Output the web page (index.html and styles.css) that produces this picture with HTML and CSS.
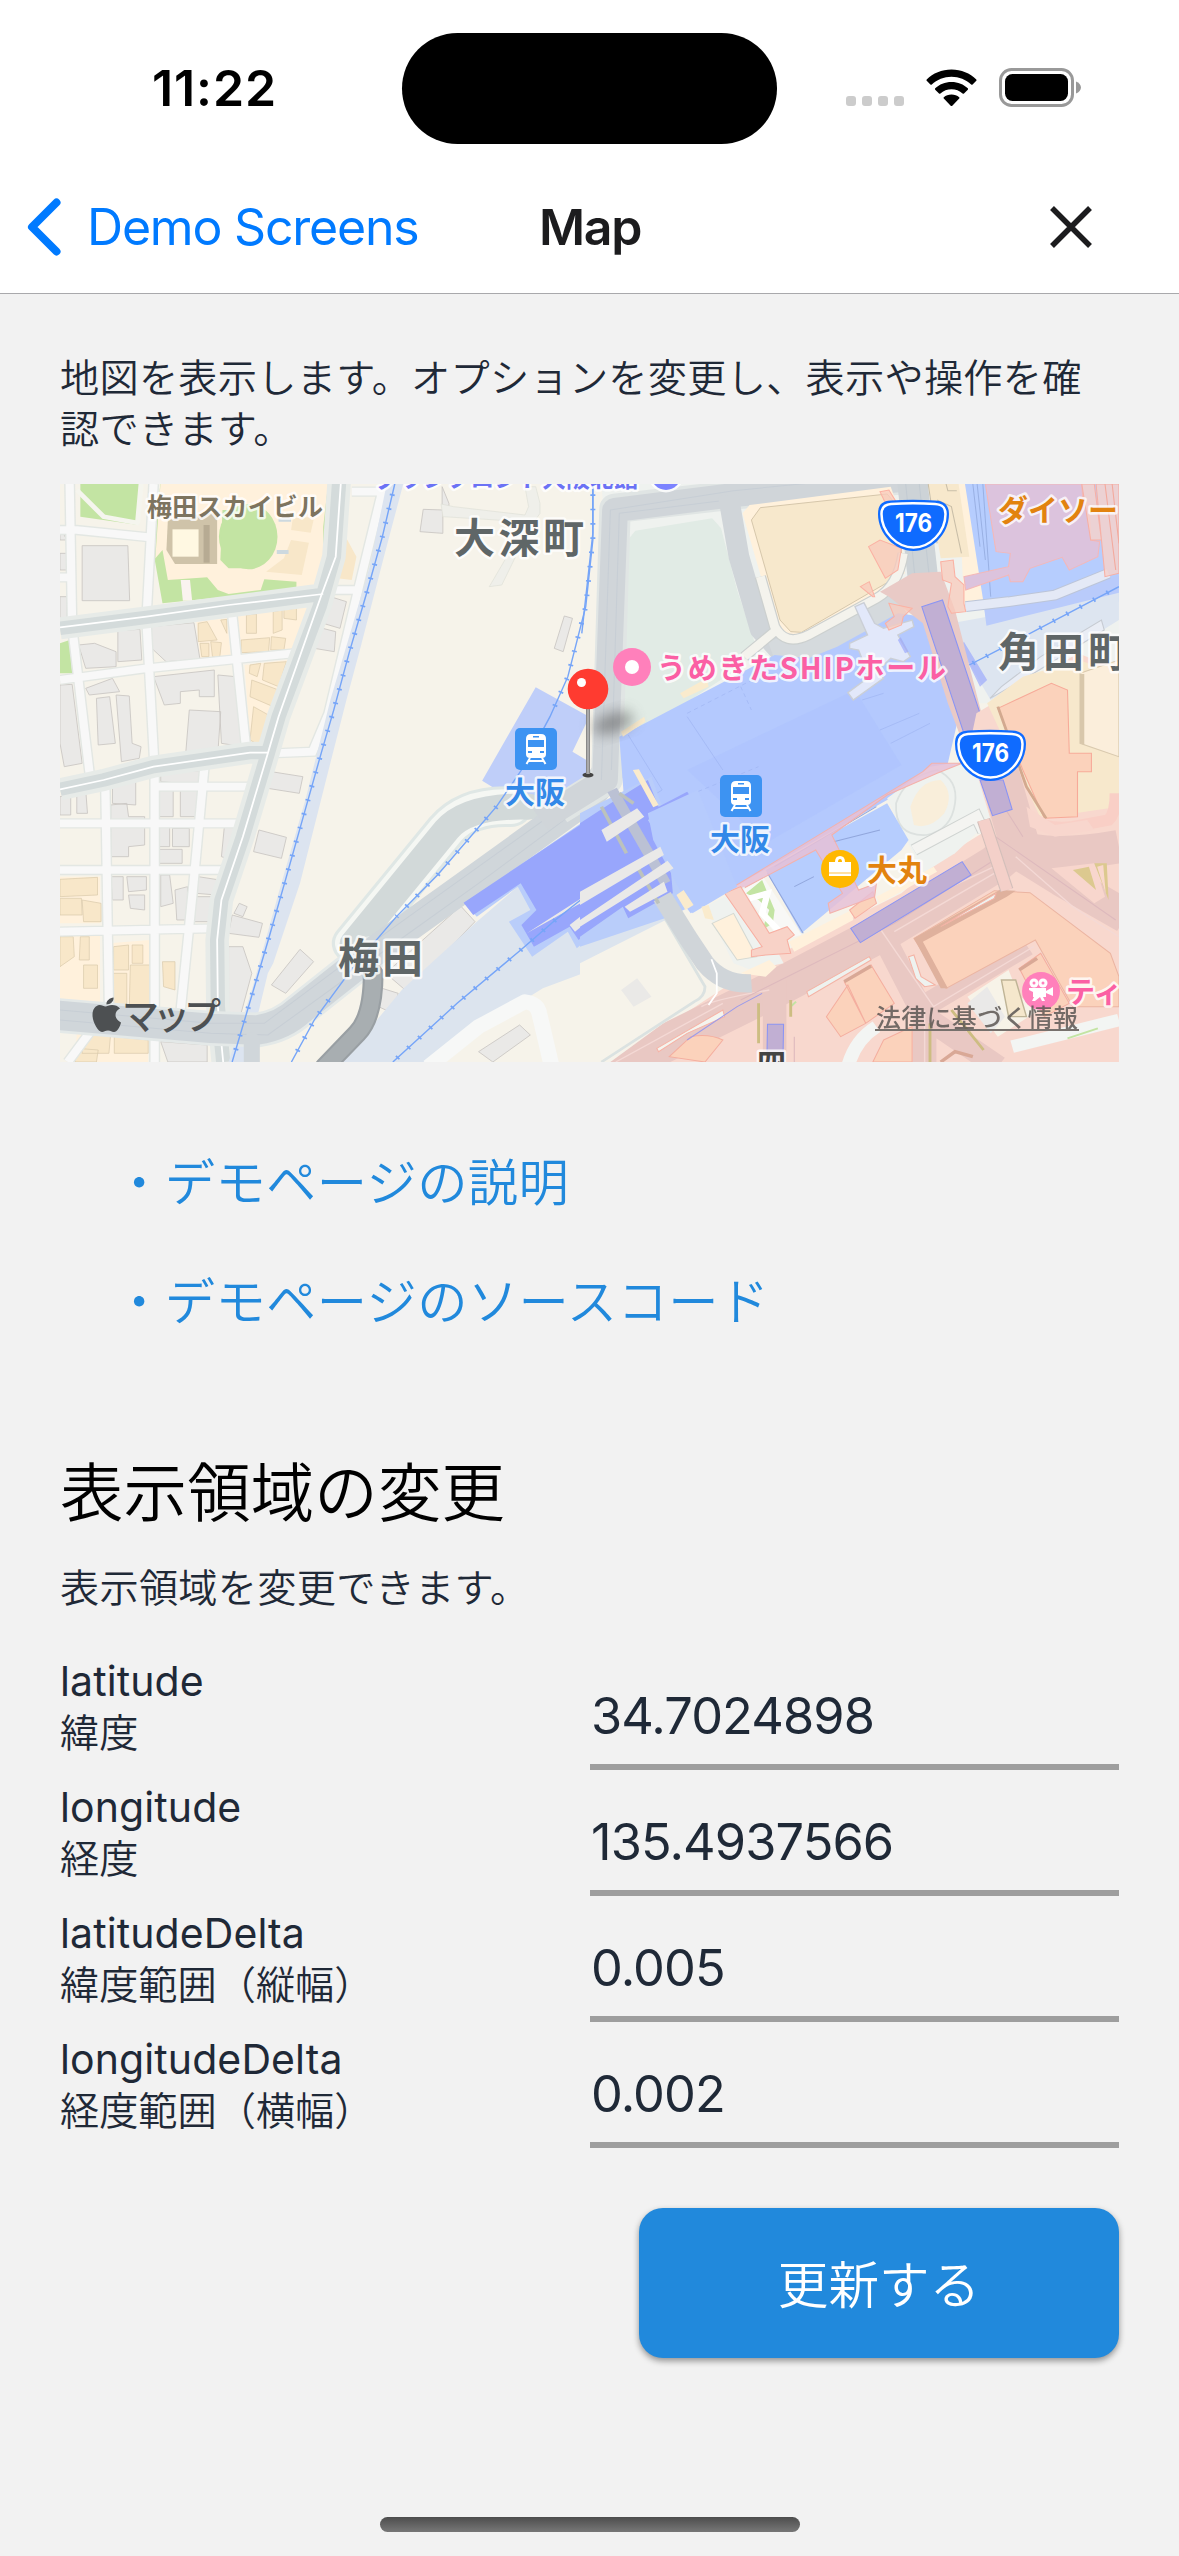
FILE: index.html
```html
<!DOCTYPE html>
<html lang="ja">
<head>
<meta charset="utf-8">
<title>Map</title>
<link rel="stylesheet" href="styles.css">
</head>
<body>
<header class="top">
  <div class="status">
    <div class="status-time"><span class="time">11:22</span></div>
    <div class="island"></div>
    <div class="status-icons">
      <svg class="dots" width="58" height="38" viewBox="0 0 58 38"><g fill="#ccc"><rect x="0" y="27" width="10" height="10" rx="3"/><rect x="16" y="27" width="10" height="10" rx="3"/><rect x="32" y="27" width="10" height="10" rx="3"/><rect x="48" y="27" width="10" height="10" rx="3"/></g></svg>
      <svg class="wifi" width="51" height="38" viewBox="0 0 51 38"><path d="M25.500 0.500C35.300 0.500 44 4.300 50.300 10.400Q50.900 11.100 50.300 11.800L46.600 15.500Q45.900 16.100 45.200 15.500C40 10.500 33 7.700 25.500 7.700S11 10.500 5.800 15.500Q5.100 16.100 4.400 15.500L.7 11.800Q.1 11.100.7 10.400C7 4.300 15.700.5 25.500.5Z"/><path d="M25.500 13C32 13 37.600 15.400 41.800 19.300Q42.400 20 41.800 20.700L38 24.400Q37.300 25 36.600 24.400C33.600 21.700 29.700 20.200 25.500 20.200S17.400 21.700 14.400 24.400Q13.700 25 13 24.400L9.200 20.700Q8.600 20 9.200 19.300C13.400 15.400 19 13 25.500 13Z"/><path d="M25.500 25.500C28.600 25.500 31.200 26.500 33.200 28.200Q33.900 28.900 33.200 29.600L26.300 36.700Q25.500 37.400 24.700 36.700L17.800 29.600Q17.100 28.900 17.800 28.200C19.800 26.500 22.400 25.500 25.500 25.500Z"/></svg>
      <svg class="battery" width="82" height="39" viewBox="0 0 82 39"><rect x="1.500" y="1.500" width="72" height="36" rx="11" fill="none" stroke="#999" stroke-width="3"/><rect x="6" y="6" width="63" height="27" rx="7.500"/><path d="M77 13.500C80 14.500 82 17 82 19.500S80 24.500 77 25.500Z" fill="#999"/></svg>
    </div>
  </div>
  <nav class="nav">
    <a class="back" href="#"><svg width="34" height="58" viewBox="0 0 34 58"><path d="M29.500 4.500 5 29 29.500 53.500" fill="none" stroke="#007aff" stroke-width="8" stroke-linecap="round" stroke-linejoin="round"/></svg><span class="back-label">Demo Screens</span></a>
    <h1 class="title">Map</h1>
    <svg class="close" width="42" height="42" viewBox="0 0 42 42"><path d="M2 2 40 40M40 2 2 40" stroke="#1c1c1e" stroke-width="5.500"/></svg>
  </nav>
</header>

<main class="content">
  <p class="lead">地図を表示します。オプションを変更し、表示や操作を確認できます。</p>

  <svg class="map" width="1059" height="578" viewBox="60 484 1059 578">
    <defs>
      <filter id="soft" x="-50%" y="-50%" width="200%" height="200%"><feGaussianBlur stdDeviation="7"/></filter>
      <linearGradient id="pole"><stop offset="0" stop-color="#777"/><stop offset=".5" stop-color="#bbb"/><stop offset="1" stop-color="#777"/></linearGradient>
      <g id="train"><rect width="42" height="42" rx="5" fill="#3d93f2"/><path fill="#fff" d="M16 6H26Q31 6 31 11V26Q31 30 27 30H15Q11 30 11 26V11Q11 6 16 6Z"/><path fill="#3d93f2" d="M13 12H29V19H13ZM18 8H24V9.500H18ZM13 23H17V25H13ZM25 23H29V25H25Z"/><path d="M15 30 11.500 36M27 30 30.500 36M14 33H28" stroke="#fff" stroke-width="2" fill="none"/></g>
      <g id="shield"><path d="M0-12C0-20 3-25 13-25.500Q35-27 57-25.500C67-25 71-20 71-12C71 8 54 25 35.500 25S0 8 0-12Z" fill="#0f6bff"/><path d="M3.500-12C3.500-18 6-21.500 13-22Q35-23.500 57-22C65-21.500 67.500-18 67.500-12C67.500 6 52 21.500 35.500 21.500S3.500 6 3.500-12Z" fill="none" stroke="#fff" stroke-width="2.500"/><text x="17" y="5.500" class="shield-no" textLength="37" lengthAdjust="spacingAndGlyphs">176</text></g>
    </defs>
    <rect x="60" y="484" width="1059" height="578" fill="#f6f3ea"/>

    <!-- western half: city blocks, Sky Building, freight line -->
    <g transform="translate(50 340) scale(.35714 .33333)">
      <path fill="#c3e4a3" d="M85 420H255L248 555 85 530ZM310 420H780V740L590 760 315 790 290 640ZM28 910 55 900 62 1000H28Z"/>
      <path fill="#fff1dc" d="M310 420H780L765 560 765 730 690 745V725L600 718 590 750 500 762 470 750 440 712 330 720 315 630 295 655Z"/>
      <path d="M75 450 150 530 250 550M255 432 245 550" stroke="#f5f5ee" stroke-width="14" fill="none"/>
      <ellipse cx="555" cy="590" rx="82" ry="98" fill="#c3e4a3"/><path fill="#c3e4a3" d="M483 510H560V685H500L477 660Z"/>
      <path fill="#cfc3a9" d="M330 540 430 520H468V672H350L326 630Z"/><path fill="#b7ab93" d="M430 555H447V668H430Z"/><path fill="#fff8e2" d="M343 568H416V650H343Z"/>
      <path fill="#f8e7c9" d="M675 600 725 608 705 705 605 695 655 655ZM680 535 740 530 730 578 675 570ZM830 595 858 650 845 720 805 715 820 650Z"/><path fill="#cdd9df" d="M635 630H668V642H635ZM640 535H675V545H640Z"/>
      <path fill="#faf3ef" d="M366 720H392L398 782H372Z"/>
      <path fill="#fff1dc" d="M410 845 495 835 507 955 420 955ZM525 825 690 800 725 805 680 930 535 945ZM545 975 665 960 590 1220 560 1210ZM28 1610H140V1750H28ZM28 1785H140V1990H28ZM165 1810 280 1800V1990H170ZM75 2080 275 2095V2166H70Z"/>
      <g fill="#f8e7c9" stroke="#d9c9aa" stroke-width="2"><path d="M415 850 440 845 468 900 415 905ZM478 840 495 838V880ZM420 910H445V950H425ZM450 905 480 908 475 955 455 950ZM550 825 578 822V880H550ZM625 815 650 810V870L625 880ZM655 808 690 805V840L655 835ZM535 900 615 893 612 935 535 938ZM620 890 660 895 655 930 618 930ZM560 975 590 970 580 1010 558 1000ZM600 970 662 965 640 1040 595 1020ZM565 1020 640 1050 625 1100 560 1070ZM570 1100 620 1130 585 1215 560 1200Z"/><path d="M28 1618 133 1612V1665L28 1670ZM28 1675H88L90 1725H28ZM90 1680 143 1690V1745H94ZM28 1790H65L68 1850 28 1880ZM85 1790H110V1860H82ZM94 1875H133V1945H94ZM178 1820 220 1815V1890H178ZM230 1815H260V1870H230ZM175 1900H215V2000H170ZM225 1875H282V2000H222ZM315 1865H350V1950L318 1940ZM90 2080H170L165 2140H90ZM180 2090 275 2100V2140H180ZM75 2125 135 2130 130 2166H70Z"/></g>
      <g fill="#eae9e7" stroke="#c9c6c3" stroke-width="2.500"><path d="M90 617H218L223 782H90ZM28 565 48 600 28 600ZM28 640H48V690H28ZM28 770H48V840H28ZM80 915 125 910 185 935V980L100 985ZM190 872 252 868 257 960 190 965ZM282 860 403 848 420 958 325 965 285 925ZM745 860 800 875 796 935 740 925ZM785 770 830 785 812 865 765 850ZM100 1045 175 1015 195 1055 110 1065ZM28 1035 62 1033 90 1270 40 1280 28 1210ZM130 1075 167 1070 183 1210 135 1215ZM185 1065 222 1068 230 1210 255 1220 250 1255 200 1265ZM290 1010 460 990V1070L418 1070V1050L365 1055V1090L320 1095ZM390 1110 478 1115 470 1240 380 1240ZM470 1005 520 1010 540 1220 480 1210Z"/><path d="M170 1395 215 1390 220 1430 265 1430V1515L220 1520V1550H170ZM175 1330 240 1325V1395L175 1390ZM75 1355 100 1350 105 1420H75ZM28 1370 58 1365V1425H28ZM305 1350H345V1430H305ZM365 1350 420 1345V1430H365ZM305 1460H335V1520H305ZM343 1465H390V1520H343ZM305 1528H370V1570H305ZM490 1440 525 1460 510 1560 480 1550ZM585 1470 662 1492 648 1555 570 1535ZM590 1290 708 1310 698 1360 580 1340ZM310 1295 425 1292V1335L310 1325ZM170 1610H205V1680H175ZM215 1610H270V1650L220 1655ZM220 1665H265V1710L225 1705ZM310 1605H335L345 1690 310 1700ZM350 1650 385 1640V1740H355ZM415 1610 475 1620 465 1665 410 1660ZM400 1670H465L455 1745H400ZM510 1725 595 1750 585 1792 500 1780ZM530 1690 552 1700 540 1730 515 1720ZM500 1820H540L565 1900 535 2020H500ZM700 1828 738 1865 660 1960 620 1935ZM1150 1698 1190 1745 1000 1955 940 1900ZM930 1945 975 1960 960 2020 920 2000ZM310 2105 440 2115V2166H330ZM1098 440 1117 490V500L1098 495ZM1045 508 1100 510V580L1036 575ZM1440 828 1463 835 1437 935 1412 925ZM1200 2135 1315 2055 1345 2085 1240 2166Z"/></g>
      <path fill="#efefea" stroke="#dfe0d8" stroke-width="2" d="M1330 440H1360L1372 490V520L1340 570 1265 735 1230 740 1290 630 1325 545 1100 530 1095 492 1130 500 1330 525 1340 500Z"/>

      <g fill="none" stroke="#e3e7e3" stroke-width="31"><path d="M55 432 62 860 112 1310M290 432 270 840 293 1290V2166M510 820 550 1235M155 1340 165 2000 50 2166M432 1285 400 1650 365 2020M28 570H75L280 592M28 712H62M28 1020 270 985 680 940M293 1340H560M28 1450H530M28 1590H495M28 1775 455 1765M845 455H930L865 740 780 1120 735 1235 620 1240M770 750H860"/></g>
      <g fill="none" stroke="#f8f8f8" stroke-width="23"><path d="M55 432 62 860 112 1310M290 432 270 840 293 1290V2166M510 820 550 1235M155 1340 165 2000 50 2166M432 1285 400 1650 365 2020M28 570H75L280 592M28 712H62M28 1020 270 985 680 940M293 1340H560M28 1450H530M28 1590H495M28 1775 455 1765M845 455H930L865 740 780 1120 735 1235 620 1240M770 750H860"/></g>
      <g fill="none" stroke-linejoin="round">
        <path stroke="#e7ebe8" stroke-width="66" d="M810 420 795 650 755 800 640 1130 610 1240 540 1490 480 1680 468 1800 470 2000 485 2166M28 865 270 832 500 800 770 762M28 1348 150 1320 290 1280 560 1238H610"/>
        <path stroke="#d4dbdb" stroke-width="40" d="M810 420 795 650 755 800 640 1130 610 1240 540 1490 480 1680 468 1800 470 2000 485 2166M28 865 270 832 500 800 770 762M28 1348 150 1320 290 1280 560 1238H610"/>
        <path stroke="#fff" stroke-width="5" d="M815 420 800 650 760 765 640 1130 610 1240 540 1490 480 1680 468 1800 470 2000 485 2166M28 862 270 830 500 795 765 762M28 1348 150 1320 290 1280 560 1238H610"/>
      </g>
      <path fill="#dce4f0" d="M945 420H992L935 650 870 920 830 1080 780 1290 700 1630 625 1870 610 1900 550 2166H500L565 1950 640 1660 715 1380 785 1080 835 900 895 680Z"/>
      <path fill="#dce4ee" d="M1190 1750 1320 1630 1360 1715 1340 1800 1568 1740V1870L1380 1945 1050 2166H820L900 2060 985 1950Z"/>
      <path fill="none" stroke="#f7f8f7" stroke-width="44" stroke-linejoin="round" d="M1060 2180 1200 2060 1330 1985Q1365 1990 1370 2020L1405 2180"/>
      <path fill="#bfcef9" d="M1360 1042 1510 1130 1463 1235 1510 1265V1320L1360 1420 1210 1322Z"/>
      <g fill="none" stroke-linecap="round">
        <path stroke="#dfe7e5" stroke-width="122" d="M850 1810 1110 1470Q1170 1395 1290 1400"/><path stroke="#f5f7f3" stroke-width="104" d="M850 1810 1110 1470Q1170 1395 1290 1400"/><path stroke="#d2d9d9" stroke-width="78" d="M850 1810 1110 1470Q1170 1395 1340 1400"/>
        <path stroke="#e4e9e8" stroke-width="104" d="M10 2025 450 2065 580 2070Q650 2060 700 2010L900 1840"/>
        <path stroke="#d0d6da" stroke-width="88" d="M10 2025 450 2065 580 2070Q650 2060 700 2010L900 1840 1200 1610 1510 1370 1580 1270"/>
        <path stroke="#c7ced5" stroke-width="3" d="M28 2010 450 2050 600 2050 900 1810 1200 1580 1540 1320M28 2040 450 2080 610 2085 900 1860 1200 1630 1540 1360"/>
        <path stroke="#d0d6da" stroke-width="45" d="M565 2100V2180"/>
        <path stroke="#999fa3" stroke-width="58" d="M905 1900Q905 2030 860 2080L770 2180"/><path stroke="#a8aeb1" stroke-width="46" d="M905 1900Q905 2030 860 2080L770 2180"/>
      </g>
      <path fill="#b9cdfa" d="M1160 1690 1568 1390V1740L1475 1825 1450 1775 1350 1850 1285 1745 1345 1710 1310 1640 1195 1730Z"/>
      <path fill="#98a6fc" d="M1158 1688 1568 1395V1725L1480 1800 1455 1760 1355 1820 1320 1755 1362 1710 1318 1630 1185 1725Z"/>
      <path fill="#eae9e8" d="M1335 1780 1480 1680 1568 1610V1640ZM1455 1755 1568 1660V1690L1470 1775Z"/>
      <g fill="none" stroke="#76a5f8"><path stroke-width="4" d="M968 420 930 593 885 765 838 937 795 1108 760 1237 715 1408 658 1625 612 1797 565 1967 510 2166M1520 420V600L1500 800 1450 1010 1400 1130 1320 1290 1250 1400 1085 1605 970 1730 850 1880 740 2040 676 2166M1568 1610 1415 1740 1318 1830 1140 1990 960 2166"/><path stroke-width="14" stroke-dasharray="5 38" d="M968 420 930 593 885 765 838 937 795 1108 760 1237 715 1408 658 1625 612 1797 565 1967 510 2166M1520 420V600L1500 800 1450 1010 1400 1130M1250 1400 1085 1605 970 1730M780 1980 740 2040 676 2166M1415 1740 1318 1830 1140 1990 960 2166"/></g>
    </g>

    <!-- eastern half: station complex, Route 176, underground malls -->
    <g transform="translate(580 470) scale(.35714 .33333)">
      <path fill="#eff2ef" d="M60 42H1509V700L900 700 120 800Z"/>
      <path fill="#e1ebe5" d="M130 215 155 182 370 145 395 175 440 360 490 520 450 590 110 830Z"/>
      <g fill="none" stroke-linejoin="round"><path stroke="#e0e5e4" stroke-width="88" d="M-60 1020 75 930 98 115 430 75 900 30"/><path stroke="#d0d5d9" stroke-width="72" d="M-110 1050 70 930 98 120 430 75 900 30"/><path stroke="#c7ced5" stroke-width="3" d="M60 930 85 120 430 62 900 12M88 900 110 130 430 88"/><path stroke="#d0d5d9" stroke-width="58" d="M415 75 445 260 505 480 560 545"/><path stroke="#d5dadd" stroke-width="85" d="M540 555 700 500 900 400"/><path stroke="#cdd3d7" stroke-width="85" d="M930 30 970 420"/><path stroke="#c3cbd2" stroke-width="3" d="M912 42 945 400M950 42 985 390"/></g>
      <path fill="#fff1dc" d="M455 130 475 105 870 50 890 110 910 310 620 515 580 505 545 460Z"/>
      <path fill="#f7e8cc" stroke="#cfc0a4" stroke-width="2.500" d="M480 150 505 113 860 72 890 110 905 310 620 487 590 485 560 450Z"/>
      <path fill="#fff1dc" d="M1060 42H1080L1110 260 1130 390 1075 400Z"/><path fill="#f7e8cc" d="M975 42H1060L1090 260 1010 265Z"/><path fill="none" stroke="#c9bea8" stroke-width="3" d="M975 42 1000 220M1000 90 1040 110 1068 250M1025 42 1030 62H1055"/>
      <path fill="#b6cdfe" d="M1078 42H1509V395L1140 467Z"/>
      <path fill="none" stroke="#94abde" stroke-width="2.500" d="M1100 42 1120 230M1112 42 1135 270M1128 42 1150 380"/>
      <path fill="#dde5f0" d="M1040 460 1140 440 1509 345V450L1150 690 1100 600Z"/><path fill="#b9cbfb" d="M1130 400 1509 318V368L1138 467Z"/>
      <path fill="none" stroke="#bcc5d8" stroke-width="32" d="M1080 410 1200 395 1330 375 1480 310"/><path fill="none" stroke="#e4e9f6" stroke-width="26" d="M1080 410 1200 395 1330 375 1480 310"/>
      <path fill="#e9edf5" stroke="#c6cbd2" stroke-width="3" d="M1148 685 1180 650 1290 560 1460 450 1468 480 1240 630Z"/>
      <path fill="#dcc3dd" stroke="#f4b8b8" stroke-width="3" d="M1135 42H1405L1408 90 1425 100 1430 210 1455 215 1450 260 1380 295 1370 300 1350 262 1260 295 1240 335 1205 335 1200 315 1080 360 1075 320 1200 290 1205 250 1165 245Z"/>
      <path fill="#f6d1cb" fill-opacity=".85" stroke="#f7b0a5" stroke-width="3" d="M1445 42H1509V310L1470 320ZM1405 42H1440L1460 210H1430Z"/>
      <path fill="none" stroke="#f3a99c" stroke-width="3" d="M1470 42 1500 300M1490 42 1509 220"/>
      <path fill="#b4c9fe" d="M110 800 430 620 545 555 640 565 720 530 890 430 960 440 1060 740 1030 880 860 990 400 1270 310 1330 130 1080Z"/>
      <path fill="#adc3fe" d="M770 660 900 885 520 1120 300 900Z" opacity=".65"/>
      <g fill="none" stroke="#9fb5f2" stroke-width="2"><path d="M135 795 230 960 170 1000M300 740 400 900M790 690 850 670M840 780 950 730M870 820 980 760" /><path stroke-dasharray="12 10" d="M300 730 500 620M450 650 480 720M250 1000 500 890"/></g>
      <path fill="#faebcd" d="M280 670 355 625 360 650 290 685ZM115 785 180 740 183 755 120 800Z"/>
      <path fill="none" stroke="#ccd0cf" stroke-width="32" d="M505 320 545 470Q575 530 640 495L830 385Q890 350 905 250M550 480 460 560"/><path fill="none" stroke="#f4f3ed" stroke-width="25" d="M505 320 545 470Q575 530 640 495L830 385Q890 350 905 250M550 480 460 560"/>
      <path fill="#e2e8fa" stroke="#cbcfd6" stroke-width="4" d="M770 410 795 398 825 460 850 475 930 450 935 470 890 495 925 560 905 575 870 565 830 605 850 625 765 690 750 668 810 620 780 540 755 535V520L805 495Z"/>
      <path fill="#98a6fc" d="M890 510 898 502 920 545 910 550ZM1065 530 1075 515 1140 630 1120 650Z" opacity=".65"/>
      <path fill="#e9cac6" d="M930 310 1010 305 1050 420 1135 775 1140 870H1090L1030 700 960 460 865 380 840 365Z"/>
      <g fill="#f8cabb" fill-opacity=".75" stroke="#fbb1a3" stroke-width="3"><path d="M840 65 865 60 885 95 860 110ZM808 230 840 210 900 235 890 300 855 325ZM785 350 810 335 825 380 820 380ZM1010 275 1045 270 1050 320 1075 345V400L1080 425 1040 430 1030 410 1040 340 1015 330ZM865 400 930 415 905 440 900 465 865 480 855 460 880 440Z"/></g>
      <path fill="#c1afd3" stroke="#8b94f4" stroke-width="3" d="M957 410 1015 390 1135 778 1075 790Z"/>

      <!-- underground mall area south of the station -->
      <path fill="#f8d8ce" d="M80 1780 480 1500 580 1440 900 1270 1020 1160 1140 1080 1090 830 1110 730 1250 640 1395 550 1509 600V1780Z"/>
      <path fill="#f7e8cc" d="M1140 700 1240 620 1395 570 1509 610V1010L1290 1045Z"/>
      <path fill="#fbd2bb" stroke="#f7aa99" stroke-width="3" d="M1170 715 1320 640 1365 660 1370 850H1432V905H1393V1040L1300 1045 1240 900Z"/>
      <path fill="#fbeedb" stroke="#d9c9ae" stroke-width="3" d="M1400 610 1509 570V860L1400 820Z"/><path fill="#d8c7ab" d="M1400 612H1412V825L1400 820Z"/>
      <path fill="none" stroke="#d3a98f" stroke-width="8" d="M1170 710 1250 950 1305 1045"/>
      <path fill="none" stroke="#f9cfc6" stroke-width="34" d="M1175 980 1260 1040Q1300 1080 1380 1070L1480 1050Q1500 1030 1500 970"/>
      <g fill="none" stroke="#e9c8c3" stroke-linejoin="round"><path stroke-width="112" d="M70 1810 540 1560 860 1380 1165 1180 1230 1120 1150 820"/><path stroke-width="100" d="M1200 1120Q1300 1170 1509 1130M1200 1130 1350 1230 1530 1340"/><path stroke-width="66" d="M850 1400 965 1640V1790M960 1610 1250 1425M965 1640 1170 1790"/><path stroke-width="66" d="M545 1530V1790"/></g>
      <path fill="#f8d6cd" d="M1250 1010 1330 1065 1420 1050 1440 1080 1330 1100 1260 1070ZM1320 1195 1440 1180 1470 1280 1440 1300Z"/>
      <path fill="#dcc98f" d="M1380 1200 1425 1190 1445 1260ZM1440 1180H1475L1480 1290Z"/><path fill="#f9d8cd" d="M1448 1190 1465 1185 1472 1270Z"/>
      <g fill="none" stroke="#f4d9d5" stroke-width="4"><path d="M340 1610Q370 1590 530 1560M830 1360 990 1610 1270 1430M965 1620V1776M1220 1160 1380 1310 1509 1400M860 1340 1160 1190M400 1600 100 1776M880 1385 1160 1210"/></g>
      <path fill="#fbd2bb" stroke="#ebb5a2" stroke-width="3" d="M935 1405 1160 1262 1260 1268 1485 1450 1509 1520V1610H1380L1275 1410 1025 1555Z"/><path fill="#dfb19d" d="M935 1405 1175 1260 1220 1262 1195 1280 960 1415 1030 1555 1010 1555Z"/>
      <path fill="#eef2ef" stroke="#f4b3a5" stroke-width="3" d="M920 1460 935 1455 955 1520 995 1545 965 1550 940 1525ZM635 1565 810 1460 815 1470 640 1580ZM1010 1370 1165 1270 1160 1285Z"/>
      <path fill="#fbd2bb" stroke="#f4ae9f" stroke-width="3" d="M740 1535 815 1485 880 1600 800 1660ZM1230 1495 1290 1450 1370 1600 1300 1640ZM850 1710 930 1670V1776H820ZM250 1760 310 1700Q360 1690 400 1710L350 1776ZM690 1640 750 1545 800 1660 730 1700Z"/><path fill="none" stroke="#d9a896" stroke-width="10" d="M740 1535 815 1488M1230 1500 1280 1465M1010 1776 1050 1745 1100 1760"/>
      <path fill="#f7f3e8" d="M1085 1580 1200 1500 1230 1580 1300 1610 1170 1700Z"/><path fill="#eae9e8" d="M1085 1600 1140 1550 1190 1640 1150 1690Z"/><path fill="#f5e7cc" stroke="#bfb496" stroke-width="4" d="M1180 1530H1220L1250 1640H1200Z"/>
      <path fill="none" stroke="#f3f5f3" stroke-width="38" d="M750 1790Q770 1710 830 1670M1210 1730 1509 1650"/><path fill="none" stroke="#c3e4a3" stroke-width="6" d="M1365 1705 1450 1675M590 1610 605 1595"/>
      <g fill="none" stroke="#cdbd82" stroke-width="8"><path d="M980 1660V1776M1040 1620 1130 1740M500 1600V1720M590 1590V1640"/></g>
      <path fill="none" stroke="#ddb9bd" stroke-width="3" d="M1110 880 1240 1100M1150 1090 1500 1350M450 1590 880 1360 1160 1170M600 1700V1776"/>
      <path fill="#f4f4ee" stroke="#f6b3a6" stroke-width="3" d="M215 1735 400 1620 405 1640 300 1690 220 1745Z"/>

      <path fill="#eff2ef" d="M860 985 980 890 1100 870 1150 1050 1050 1150 960 1210Z"/><path fill="none" stroke="#dce1df" stroke-width="5" d="M885 1000Q910 920 1000 900Q1060 930 1050 1000 1040 1080 970 1095 880 1100 885 1000Z"/><path fill="#f9eeda" d="M925 1010Q950 930 1010 930 1050 970 1020 1030 980 1080 935 1065Z"/>
      <path fill="#b6cdfe" d="M520 1200 860 1000 920 1110 900 1140 620 1390Z"/><path fill="none" stroke="#91a6dc" stroke-width="3" d="M525 1210 625 1390M545 1190 830 1010M710 1115 840 1080M600 1250 655 1220"/>
      <path fill="#fff1dc" d="M585 1415 760 1320 765 1350 600 1445ZM830 1280 990 1190 1000 1205 840 1300Z"/><path fill="#fbd2bb" stroke="#f7afa2" stroke-width="3" d="M755 1320 820 1265 830 1300 770 1345Z"/>
      <path fill="#e6c0d6" fill-opacity=".85" stroke="#f4b1aa" stroke-width="3" d="M400 1270 960 905 985 880 1070 880 1000 910 860 975 705 1095 780 1260 830 1240 825 1280 700 1330 695 1300 735 1270 660 1140 440 1265Z"/>
      <path fill="#eff2ef" d="M350 1310 460 1250 570 1480 480 1500 430 1480Z"/><path fill="#f8f8f6" d="M455 1260 515 1225 620 1395 560 1410Z"/><path fill="#c3e4a3" d="M465 1270 510 1230 545 1320 540 1360 510 1380 530 1320 500 1290Z"/><path fill="none" stroke="#fff" stroke-width="18" d="M475 1285 525 1270 510 1330 560 1385"/><path fill="#fff1dc" stroke="#d5d9d2" stroke-width="3" d="M370 1360 430 1330 495 1460 440 1470Z"/><path fill="#fff1dc" d="M450 1510 530 1470 550 1490 520 1520Z"/>
      <path fill="#f8d2c7" stroke="#f7afa2" stroke-width="3" d="M405 1270 450 1250 530 1390 580 1370 600 1395 580 1410 590 1450 520 1455 480 1460V1440L510 1430Z"/>
      <path fill="#c1afd3" stroke="#8b94f4" stroke-width="3" d="M758 1375 1070 1175 1095 1215 785 1418ZM1120 930 1185 930 1210 1018 1155 1037ZM525 1663H570L568 1790H523Z"/>
      <path fill="none" stroke="#cfd3d1" stroke-width="36" d="M935 1140 1110 1040 1130 1085"/><path fill="none" stroke="#f4f4f1" stroke-width="30" d="M935 1140 1110 1040 1130 1085"/><path fill="none" stroke="#d3bfba" stroke-width="38" d="M1130 1050 1195 1260"/><path fill="none" stroke="#f4d0c9" stroke-width="32" d="M1130 1050 1195 1260"/>

      <!-- platforms and cream block -->
      <path fill="#dce4ee" d="M0 1410 180 1300 260 1350 0 1490Z"/><path fill="#f6f3ea" d="M0 1480 240 1350 350 1550Q345 1580 310 1600L80 1780H0Z"/>
      <path fill="none" stroke="#dbe2e1" stroke-width="8" d="M235 1340 350 1550Q350 1580 320 1595L60 1776"/><path fill="#eae9e7" d="M115 1560 160 1525 200 1580 150 1610Z"/>
      <path fill="#b9cdfa" d="M0 1030 110 970 200 920 330 1300 250 1340 0 1430Z"/><path fill="#98a6fc" d="M0 1060 100 990 190 930 220 1010 300 965 310 980 190 1050 250 1150 260 1270 135 1345 120 1310 0 1400Z"/>
      <path fill="#b6cbfd" d="M190 1030 330 960 440 1250 315 1330 205 1110Z"/>
      <g fill="none" stroke-linejoin="round"><path stroke="#bbc1d4" stroke-width="30" d="M90 960 240 1240"/><path stroke="#d0d5d9" stroke-width="55" d="M230 1280 300 1400 350 1480Q400 1545 480 1540"/><path stroke="#bcc2bd" stroke-width="10" d="M110 970 150 1000M60 1010 130 1150M160 1190 220 1300"/></g>
      <path fill="#eae9e8" d="M60 1080 160 1015 180 1040 75 1115ZM0 1265 225 1130 235 1155 0 1305ZM0 1350 245 1172 262 1195 0 1370ZM125 1310 235 1235 245 1265 140 1325Z"/><path fill="#faebcd" d="M148 900 165 898 220 1005 205 1012ZM270 1275 290 1260 318 1305 295 1320ZM340 1310 360 1305 375 1350 350 1345Z"/>
      <g fill="none" stroke="#76a5f8"><path stroke-width="4" d="M36 42V190L5 490M1090 585 1180 535 1509 350"/><path stroke-width="14" stroke-dasharray="5 38" d="M1100 580 1180 535 1509 350"/><path stroke="#9c9bea" stroke-width="3" d="M300 1710 440 1610 510 1570"/></g>
      <path fill="none" stroke="#fff" stroke-width="5" d="M368 1468 383 1510V1570L360 1605"/>
    </g>

    <g class="label">
      <text x="375" y="487" class="hall" textLength="263">グランフロント大阪北館</text><circle cx="666" cy="475" r="15" fill="#7c83ff"/>
      <text x="147" y="516" class="sky" textLength="176">梅田スカイビル</text>
      <text x="454" y="553" class="town" textLength="130">大深町</text>
      <text x="338" y="973" class="town" textLength="85">梅田</text>
      <text x="998" y="667" class="town" textLength="131">角田町</text>
      <text x="505" y="803" class="stop">大阪</text>
      <text x="710" y="850" class="stop">大阪</text>
      <text x="657" y="679" class="pink" textLength="289">うめきたSHIPホール</text>
      <text x="998" y="521" class="shop" textLength="120">ダイソー</text>
      <text x="867" y="881" class="shop" textLength="60">大丸</text>
      <text x="1066" y="1003" class="pink">ティ</text>
      <text x="757" y="1075" class="street">四</text>
    </g>
    <use href="#shield" x="878" y="526"/><use href="#shield" x="955" y="756"/>
    <use href="#train" x="515" y="728"/><use href="#train" x="720" y="775"/>
    <circle cx="632" cy="667" r="19" fill="#ff80bb"/><circle cx="632" cy="667" r="7" fill="#fff"/>
    <circle cx="840" cy="869" r="19" fill="#ffb800"/><path fill="#fff" d="M829 862H835Q835 856 840 856T845 862H851V872H829ZM838 862H842Q842 859 840 859T838 862ZM829 874H851V876H829Z"/><path fill="#ffe0a0" d="M829 872H851V874H829Z"/>
    <circle cx="1041" cy="991" r="19" fill="#ff80bb"/><g fill="#fff"><circle cx="1034" cy="983" r="4.500"/><circle cx="1043" cy="983" r="4.500"/><path d="M1033 988H1046V991L1053 987V996L1046 993V997H1043L1045 1001H1042L1040 997 1035 1001H1032L1034 997H1033V992L1029 990V988Z"/></g><g fill="#ff80bb"><circle cx="1034" cy="983" r="1.500"/><circle cx="1043" cy="983" r="1.500"/></g>
    <ellipse cx="613" cy="723" rx="21" ry="10" fill="#555" opacity=".55" filter="url(#soft)" transform="rotate(-18 613 723)"/>
    <ellipse cx="588" cy="775" rx="5.500" ry="2.500" fill="#444"/><path d="M586 704H590V774H586Z" fill="url(#pole)"/><circle cx="588" cy="689" r="20.300" fill="#ff3b30"/><circle cx="581.500" cy="682.500" r="4.500" fill="#fff"/>
    <g fill="#4d5052"><path d="M120 1008.500C117 1010 115.500 1012 115.500 1015C115.500 1018.500 118 1021 121 1022.500C120 1027 117 1032 114 1032C111.500 1032 111 1030.500 108 1030.500S104 1032 102 1032C98 1032 92.500 1022 92.500 1015C92.500 1009 95.500 1005.500 99.500 1005C102 1005 104 1006.500 105.500 1006.500S109 1005 112 1005C115 1005 118 1006 120 1008.500ZM106.500 1004.500C106 1001 109.500 998 113.500 997.500C114 1001.500 110.500 1004.500 106.500 1004.500Z"/><text x="122" y="1030" class="brand" textLength="99">マップ</text></g>
    <text x="876" y="1027" class="legal" textLength="202">法律に基づく情報</text><path d="M875 1030H1079" stroke="#77716d" stroke-width="2"/>
  </svg>

  <ul class="links">
    <li><a href="#">・デモページの説明</a></li>
    <li><a href="#">・デモページのソースコード</a></li>
  </ul>

  <section class="region">
    <h2 class="heading">表示領域の変更</h2>
    <p class="note">表示領域を変更できます。</p>
    <div class="fields">
      <div class="field"><div class="name"><span class="en">latitude</span><span class="ja">緯度</span></div><div class="value">34.7024898</div></div>
      <div class="field"><div class="name"><span class="en">longitude</span><span class="ja">経度</span></div><div class="value">135.4937566</div></div>
      <div class="field"><div class="name"><span class="en">latitudeDelta</span><span class="ja">緯度範囲（縦幅）</span></div><div class="value">0.005</div></div>
      <div class="field"><div class="name"><span class="en">longitudeDelta</span><span class="ja">経度範囲（横幅）</span></div><div class="value">0.002</div></div>
    </div>
    <div class="actions"><button class="update">更新する</button></div>
  </section>
</main>
<footer class="home"><div class="home-bar"></div></footer>
</body>
</html>
```

FILE: styles.css
```css
* { box-sizing: border-box; margin: 0; padding: 0; }
body {
  width: 1179px;
  height: 2556px;
  display: flex;
  flex-direction: column;
  overflow: hidden;
  background: #f2f2f2;
  color: #1f2937;
  font-family: Inter, "Noto Sans CJK JP", sans-serif;
}
svg { display: block; flex: none; }

.top { height: 294px; background: #fff; border-bottom: 1px solid #a9a9ac; }
.status { height: 177px; padding-top: 33px; display: grid; grid-template-columns: 402px 375px 1fr; }
.status-time { padding: 25px 0 0 152px; color: #000; }
.time { display: inline-block; font-size: 50px; font-weight: 600; line-height: 60px; letter-spacing: 0.9px; white-space: nowrap; }
.island { height: 111px; border-radius: 56px; background: #000; }
.status-icons { display: flex; align-items: flex-start; padding: 35px 0 0 69px; }
.dots { margin-top: 1px; }
.wifi { margin: 1px 22px 0; }

.nav { height: 116px; display: grid; grid-template-columns: 539px 1fr auto; align-items: center; padding-right: 87px; }
.back { display: flex; align-items: center; gap: 26px; padding: 0 0 17px 27px; color: #007aff; text-decoration: none; }
.back-label { font-size: 50px; line-height: 60px; letter-spacing: -1.2px; }
.title { font-size: 50px; font-weight: 600; line-height: 60px; letter-spacing: -1.3px; color: #1c1c1e; padding-bottom: 17px; }
.close { margin-bottom: 17px; }

.content { flex: 1; padding: 56px 60px 0; }
.lead, .note { font-family: "Noto Sans CJK JP", sans-serif; font-size: 39.200px; font-weight: 350; line-height: 51px; letter-spacing: 0.26px; }
.lead { width: 1040px; margin-bottom: 32px; }

.label { font-family: "Noto Sans CJK JP", sans-serif; font-weight: 700; paint-order: stroke; stroke: #fffc; stroke-width: 5px; stroke-linejoin: round; }
.hall { font-size: 24px; fill: #6b72f5; }
.sky { font-size: 25px; fill: #7d745f; }
.town { font-size: 41px; fill: #5f6667; }
.stop { font-size: 30px; fill: #3288e8; }
.pink { font-size: 29px; fill: #fb5fa4; }
.shop { font-size: 30px; fill: #e2830f; }
.street { font-size: 29px; fill: #444; }
.shield-no { font: 700 25px Inter, sans-serif; fill: #fff; }
.brand { font: 500 37px "Noto Sans CJK JP", sans-serif; }
.legal { font: 500 25px "Noto Sans CJK JP", sans-serif; fill: #5c5754; opacity: .85; }

.links { list-style: none; padding: 58px 0 0 54px; }
.links li { height: 119px; font: 350 50.300px/119px "Noto Sans CJK JP", sans-serif; letter-spacing: 0.4px; }
.links a { color: #2189dc; text-decoration: none; }

.heading { margin-top: 92px; font: 350 63.400px/76px "Noto Sans CJK JP", sans-serif; letter-spacing: 0.2px; color: #000; }
.note { margin-top: 34px; }
.fields { padding-top: 44px; }
.field { height: 126px; display: grid; grid-template-columns: 530px 529px; }
.name { display: flex; flex-direction: column; padding-top: 1px; }
.en { font-size: 41px; line-height: 51px; letter-spacing: 0.1px; }
.ja { margin-top: -2px; font: 350 39.200px/51px "Noto Sans CJK JP", sans-serif; }
.value { height: 115px; border-bottom: 6px solid #9e9e9e; padding: 30px 0 0 1px; font-size: 50.500px; line-height: 62px; letter-spacing: -0.9px; }
.actions { display: flex; justify-content: flex-end; padding-top: 49px; }
.update { width: 480px; height: 150px; border: 0; border-radius: 24px; padding-bottom: 3px; background: #2189dc; color: #fff; font: 350 50.600px/60px "Noto Sans CJK JP", sans-serif; box-shadow: 0 3px 6px #0006; }

.home { height: 39px; display: flex; justify-content: center; }
.home-bar { width: 420px; height: 15px; border-radius: 8px; background: linear-gradient(#4d4d4d, #777); }
```
